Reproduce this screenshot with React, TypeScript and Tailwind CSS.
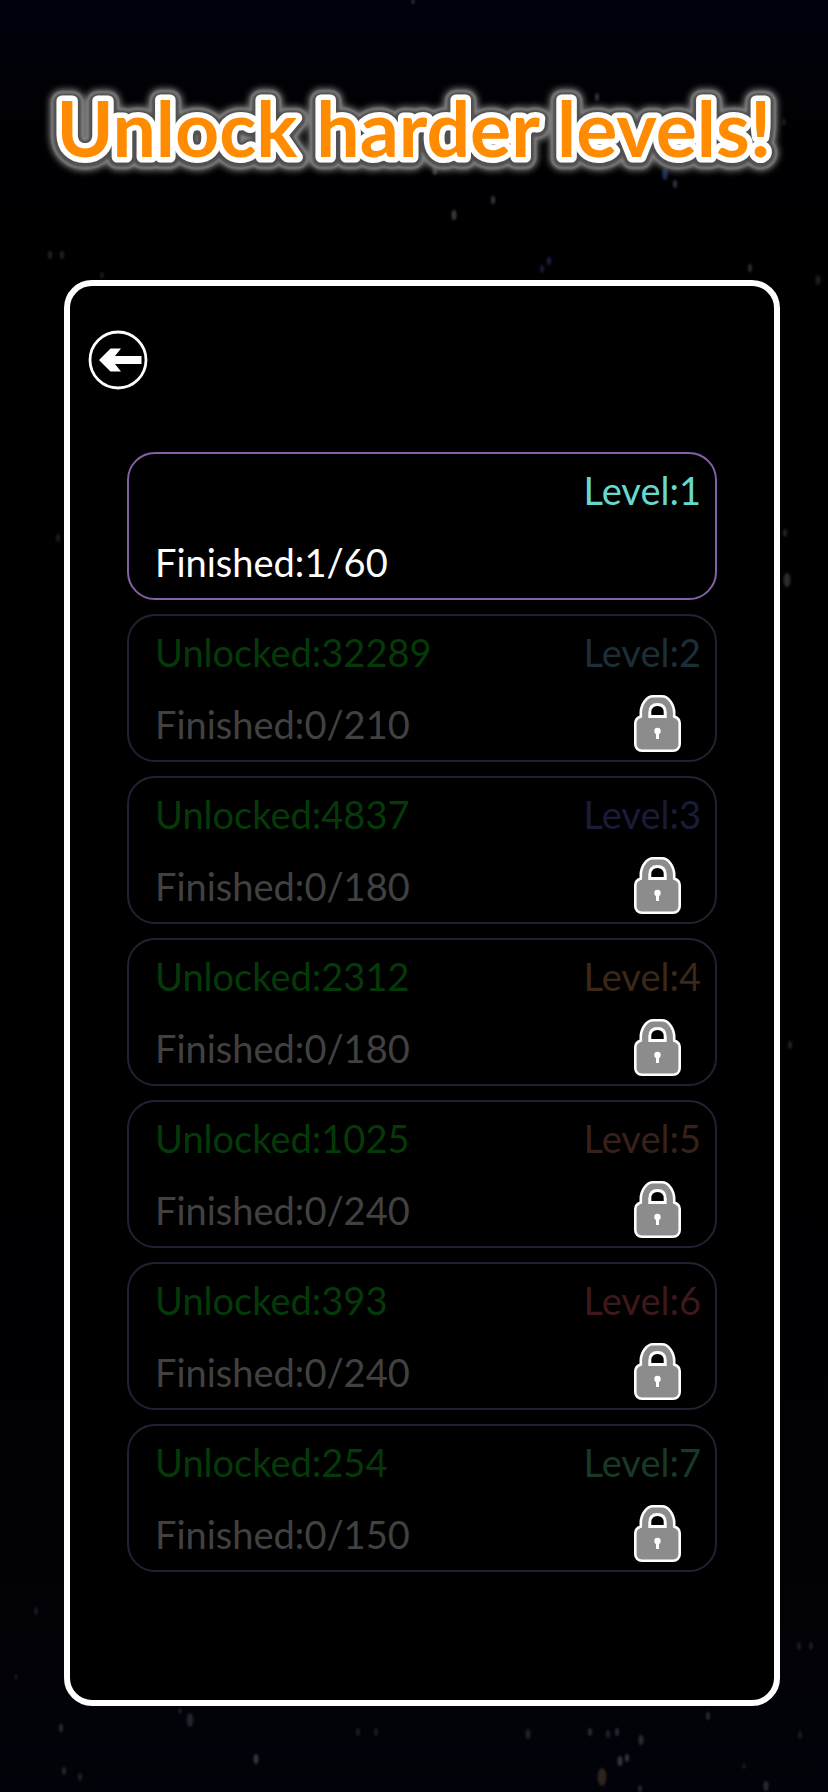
type Level = {
  level: number;
  finished: string;
  unlocked?: number;
  color: string;
};

const levels: Level[] = [
  { level: 1, finished: '1/60', color: 'text-[#66d9cc]' },
  { level: 2, finished: '0/210', unlocked: 32289, color: 'text-[#1c2e38]' },
  { level: 3, finished: '0/180', unlocked: 4837, color: 'text-[#191c38]' },
  { level: 4, finished: '0/180', unlocked: 2312, color: 'text-[#3a2819]' },
  { level: 5, finished: '0/240', unlocked: 1025, color: 'text-[#37211a]' },
  { level: 6, finished: '0/240', unlocked: 393, color: 'text-[#3d191b]' },
  { level: 7, finished: '0/150', unlocked: 254, color: 'text-[#173a27]' },
];

// x, y, half height, fill
const stars: [number, number, number, string][] = [
  [413, 1, 3, '#33334a'],
  [597, 97, 4, '#2a3444'],
  [784, 122, 3, '#22222a'],
  [435, 170, 5, '#3a3a40'],
  [665, 174, 6, '#1c2c55'],
  [675, 184, 4, '#2c3444'],
  [493, 200, 4, '#34383c'],
  [454, 215, 5, '#34383c'],
  [50, 255, 4, '#222226'],
  [62, 255, 4, '#222226'],
  [549, 261, 4, '#1e1e48'],
  [542, 269, 4, '#1a1a34'],
  [750, 268, 4, '#2c2c2c'],
  [818, 280, 5, '#1c1c1c'],
  [102, 275, 3, '#222222'],
  [58, 538, 4, '#1c1c1c'],
  [785, 533, 4, '#222222'],
  [787, 580, 7, '#2c2c2c'],
  [790, 1045, 4, '#222222'],
  [36, 1611, 4, '#181820'],
  [799, 1646, 4, '#1c1c22'],
  [811, 1646, 4, '#1c1c22'],
  [16, 1677, 3, '#181820'],
  [61, 1728, 4, '#2c2c30'],
  [190, 1720, 7, '#20242c'],
  [180, 1711, 3, '#20242c'],
  [358, 1732, 4, '#1c1c20'],
  [376, 1732, 4, '#1c1c20'],
  [256, 1759, 5, '#34343a'],
  [64, 1771, 4, '#26262a'],
  [80, 1777, 4, '#202024'],
  [708, 1716, 4, '#2a2a2e'],
  [528, 1734, 5, '#202028'],
  [590, 1732, 4, '#2a2a32'],
  [608, 1734, 4, '#22222a'],
  [617, 1732, 4, '#2a2a32'],
  [641, 1740, 5, '#2a2a30'],
  [620, 1761, 5, '#30343c'],
  [627, 1758, 4, '#30343c'],
  [602, 1777, 9, '#2e241c'],
  [640, 1789, 4, '#24242c'],
  [766, 1786, 5, '#2a2a34'],
  [744, 1766, 3, '#1c1c24'],
  [800, 1735, 4, '#1c1c24'],
];

function Stars() {
  return (
    <svg
      className="absolute inset-0 size-full blur-[1px]"
      viewBox="0 0 828 1792"
      preserveAspectRatio="none"
      aria-hidden="true"
    >
      {stars.map(([x, y, r, fill]) => (
        <ellipse key={`${x}-${y}`} cx={x} cy={y} rx={r / 2} ry={r} fill={fill} />
      ))}
    </svg>
  );
}

// Orange lettering with a white outline and a soft grey halo behind it
function Title() {
  return (
    <h1 className="relative -mx-12 pt-20 pb-[104px] text-[77px] font-bold">
      <svg className="h-24 w-full overflow-visible" strokeLinejoin="round">
        <g transform="translate(0 1)">
          <use href="#title" stroke="#777" strokeWidth="25" className="blur-[3px]" />
          <use href="#title" stroke="#8a8a8a" strokeWidth="21" className="blur-[1px]" />
          <use href="#title" stroke="#505050" strokeWidth="18" className="blur-[1px]" />
        </g>
        <use href="#title" stroke="#fff" strokeWidth="11" />
        <g fill="#ff8c00">
          <text id="title" x="50%" y="77" textAnchor="middle">
            Unlock harder levels!
          </text>
        </g>
      </svg>
    </h1>
  );
}

function BackIcon() {
  return (
    <svg viewBox="0 0 60 60" className="size-15" aria-hidden="true">
      <circle cx="30" cy="30" r="28" fill="none" stroke="#fff" strokeWidth="2.8" />
      <path
        d="M11 30 L22.5 18.5 H33 L27 26 H53.5 V34 H27 L33 41.5 H22.5 Z"
        fill="#fff"
      />
    </svg>
  );
}

function LockIcon() {
  return (
    <svg viewBox="0 0 47 57" className="h-[57px] w-[47px]" role="img" aria-label="Locked">
      <path
        d="M6.8 21.5 V18 C6.800 9 13 1.300 19 1.300 H28 C34 1.300 40.200 9 40.200 18 V21.500 C43 22.500 45.700 24 45.700 28 V49 C45.700 53 43 55.700 39 55.700 H8 C4 55.700 1.300 53 1.300 49 V28 C1.300 24 4 22.500 6.800 21.500 Z"
        fill="#8c8c8c"
        stroke="#fff"
        strokeWidth="2.6"
      />
      <path
        d="M15.800 21.500 V17.500 C15.800 12 19 9.500 23.500 9.500 C28 9.500 31.200 12 31.200 17.500 V21.500 Z"
        fill="#000"
        stroke="#fff"
        strokeWidth="3"
      />
      <circle cx="23.5" cy="36" r="3.2" fill="#fff" />
      <path d="M22 36 H25 V44 H22 Z" fill="#fff" />
    </svg>
  );
}

function LevelCard({ level, finished, unlocked, color }: Level) {
  const locked = unlocked !== undefined;

  return (
    <li>
      <button
        type="button"
        disabled={locked}
        className={`relative flex h-[148px] w-full flex-col justify-between rounded-[28px] border-2 py-3 pr-3.5 pl-[26px] text-left text-[38px] leading-[48px] ${
          locked ? 'border-[#281e33]' : 'border-[#8460a4]'
        }`}
      >
        <span className="flex w-full justify-between">
          <span className="text-[#043a08]">{locked && `Unlocked:${unlocked}`}</span>
          <span className={color}>Level:{level}</span>
        </span>
        <span className={locked ? 'text-[#414141]' : 'text-white'}>
          Finished:{finished}
        </span>
        {locked && (
          <span className="absolute right-[34px] bottom-2">
            <LockIcon />
          </span>
        )}
      </button>
    </li>
  );
}

export default function App() {
  return (
    <div className="relative min-h-screen bg-linear-to-b from-[#00000c] via-black via-25% to-[#02020a] px-12 pb-[86px] font-['Lato',sans-serif]">
      <Stars />
      <Title />

      <main className="relative ml-4 rounded-[28px] border-6 border-white bg-black px-[57px] pt-11 pb-32">
        <button type="button" aria-label="Back" className="-ml-[39px] block">
          <BackIcon />
        </button>
        <ul className="mt-[62px] flex flex-col gap-3.5">
          {levels.map((item) => (
            <LevelCard key={item.level} {...item} />
          ))}
        </ul>
      </main>
    </div>
  );
}
